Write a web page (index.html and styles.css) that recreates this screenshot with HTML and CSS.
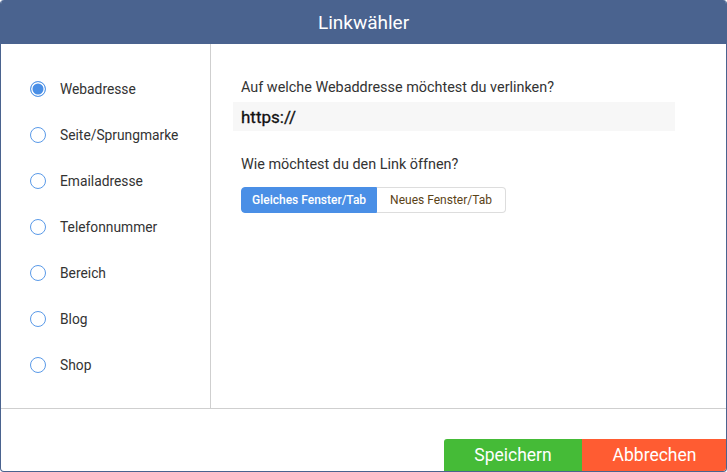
FILE: index.html
```html
<!DOCTYPE html>
<html lang="de">
<head>
    <meta charset="UTF-8">
    <title>Linkwähler</title>
    <link rel="stylesheet" href="styles.css">
</head>
<body>
    <div class="dialog">
        <div class="dialog-header">Linkwähler</div>
        <div class="dialog-body">
            <ul class="link-types">
                <li class="active"><span class="radio"></span>Webadresse</li>
                <li><span class="radio"></span>Seite/Sprungmarke</li>
                <li><span class="radio"></span>Emailadresse</li>
                <li><span class="radio"></span>Telefonnummer</li>
                <li><span class="radio"></span>Bereich</li>
                <li><span class="radio"></span>Blog</li>
                <li><span class="radio"></span>Shop</li>
            </ul>
            <div class="link-form">
                <label class="field-label" for="url">Auf welche Webaddresse möchtest du verlinken?</label>
                <input class="url-input" type="text" id="url" value="https://">
                <p class="field-label second">Wie möchtest du den Link öffnen?</p>
                <div class="toggle">
                    <button class="selected">Gleiches Fenster/Tab</button>
                    <button>Neues Fenster/Tab</button>
                </div>
            </div>
        </div>
        <div class="dialog-footer">
            <button class="btn save">Speichern</button>
            <button class="btn cancel">Abbrechen</button>
        </div>
    </div>
</body>
</html>
```

FILE: styles.css
```css
body {
    margin: 0;
    padding: 0;
    font-family: Roboto, "Liberation Sans", sans-serif;
    background: #fff;
}
.dialog {
    width: 727px;
    height: 472px;
    box-sizing: border-box;
    border: 1px solid #4a638f;
    border-top: none;
    border-radius: 4px;
    overflow: hidden;
    display: flex;
    flex-direction: column;
    background: #fff;
}
.dialog-header {
    height: 44px;
    margin: 0 -1px;
    background: #4a638f;
    color: #fff;
    font-size: 19px;
    line-height: 45px;
    text-align: center;
    flex-shrink: 0;
}
.dialog-body {
    display: flex;
    height: 364px;
    border-bottom: 1px solid #cfcfcf;
}
.link-types {
    list-style: none;
    margin: 0;
    padding: 22px 0 0 0;
    width: 209px;
    border-right: 1px solid #cfcfcf;
}
.link-types li {
    height: 46px;
    display: flex;
    align-items: center;
    font-size: 13.8px;
    color: #333;
}
.radio {
    width: 14px;
    height: 14px;
    border: 1.5px solid #5a9ae8;
    border-radius: 50%;
    margin: 0 14px 0 29px;
    box-sizing: content-box;
}
.link-types li.active .radio {
    background: #4a8fe6;
    box-shadow: inset 0 0 0 1.5px #fff;
}
.link-form {
    flex: 1;
    padding: 0 51px 0 22px;
}
.field-label {
    display: block;
    margin: 34px 0 0 8px;
    font-size: 14.4px;
    line-height: 20px;
    color: #333;
}
.field-label.second {
    margin-top: 24px;
}
.url-input {
    display: block;
    width: 100%;
    box-sizing: border-box;
    height: 29px;
    margin-top: 4px;
    padding: 0 8px;
    border: none;
    background: #f7f7f7;
    font-family: Roboto, "Liberation Sans", sans-serif;
    font-size: 17px;
    font-weight: 400;
    color: #111;
    -webkit-text-stroke: 0.3px #111;
}
.toggle {
    display: flex;
    margin: 12px 0 0 8px;
}
.toggle button {
    height: 26px;
    padding: 0 13px;
    font-family: Roboto, "Liberation Sans", sans-serif;
    font-size: 12px;
    font-weight: 400;
    background: #fff;
    color: #5b4317;
    border: 1px solid #ddd;
    border-left: none;
    border-radius: 0 4px 4px 0;
}
.toggle button.selected {
    padding: 0 10px;
    background: #4a8fe6;
    color: #fff;
    font-weight: 500;
    border: 1px solid #4a8fe6;
    border-radius: 4px 0 0 4px;
}
.dialog-footer {
    flex: 1;
    display: flex;
    justify-content: flex-end;
    align-items: flex-end;
    margin-right: -1px;
}
.btn {
    height: 32px;
    border: none;
    color: #fff;
    font-family: Roboto, "Liberation Sans", sans-serif;
    font-size: 17.5px;
    cursor: pointer;
}
.save {
    width: 138px;
    background: #45bb37;
    border-radius: 3px 0 0 0;
}
.cancel {
    width: 145px;
    background: #ff5c32;
}
```
